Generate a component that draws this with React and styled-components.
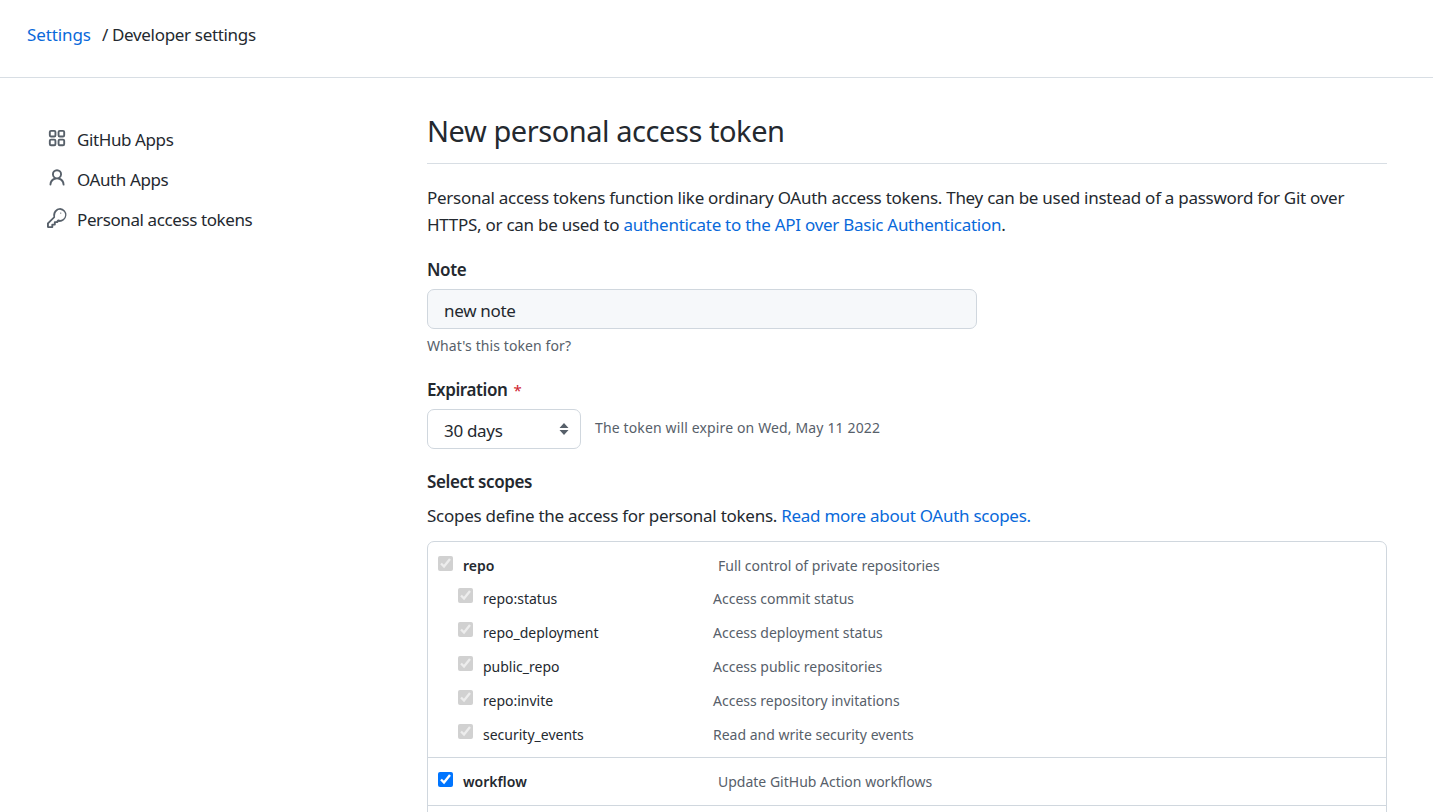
import React from "react";
import styled, { createGlobalStyle } from "styled-components";

const GlobalStyle = createGlobalStyle`
  html, body {
    margin: 0;
    height: 812px;
    overflow: hidden;
    background: #fff;
    color: #24292f;
    font-family: "Noto Sans", "Open Sans", "Liberation Sans", sans-serif;
  }
  * { box-sizing: border-box; }
`;

const Header = styled.header`
  height: 78px;
  border-bottom: 1px solid #d8dee4;
  padding: 0 27px;
  display: flex;
  align-items: center;
  padding-bottom: 9px;
  font-size: 17px;
`;

const Crumb = styled.a`
  color: #0969da;
  text-decoration: none;
  letter-spacing: -0.1px;
`;

const CrumbCurrent = styled.span`
  margin-left: 11px;
  color: #24292f;
  letter-spacing: -0.32px;
`;

const Layout = styled.div`
  display: grid;
  grid-template-columns: 427px 960px;
`;

const SideNav = styled.nav`
  padding: 41px 0 0 47px;
  display: flex;
  flex-direction: column;
`;

const NavItem = styled.a`
  height: 40px;
  display: flex;
  align-items: center;
  gap: 10px;
  font-size: 17px;
  letter-spacing: -0.4px;
  color: #24292f;
  svg {
    width: 20px;
    height: 20px;
    color: #57606a;
    fill: currentColor;
    margin-top: -2px;
  }
`;

const Main = styled.main`
  padding-top: 32px;
`;

const Title = styled.h2`
  margin: 0;
  height: 54px;
  font-size: 29px;
  font-weight: 400;
  line-height: 42px;
  letter-spacing: -0.44px;
  border-bottom: 1px solid #d8dee4;
`;

const Intro = styled.p`
  margin: 20px 0 0;
  font-size: 17px;
  line-height: 27px;
  letter-spacing: -0.27px;
`;

const Link = styled.a`
  color: #0969da;
  text-decoration: none;
`;

const Label = styled.div`
  font-size: 17px;
  font-weight: 600;
  line-height: 24px;
  letter-spacing: -0.4px;
  margin-top: ${(p) => p.$top}px;
`;

const Required = styled.span`
  color: #cf222e;
  font-size: 15px;
  font-weight: 400;
  margin-left: 6px;
`;

const NoteInput = styled.input`
  display: block;
  width: 550px;
  height: 40px;
  margin-top: 7px;
  padding: 2px 16px 0;
  background: #f6f8fa;
  border: 1px solid #d0d7de;
  border-radius: 7px;
  font: inherit;
  font-size: 17px;
  letter-spacing: -0.3px;
  color: #24292f;
`;

const Hint = styled.div`
  margin-top: 6px;
  font-size: 14px;
  line-height: 21px;
  letter-spacing: 0.1px;
  color: #57606a;
`;

const ExpiryRow = styled.div`
  display: flex;
  align-items: center;
  gap: 14px;
  margin-top: 7px;
`;

const SelectBox = styled.div`
  width: 154px;
  height: 40px;
  padding: 2px 11px 0 16px;
  display: flex;
  align-items: center;
  justify-content: space-between;
  border: 1px solid #d0d7de;
  border-radius: 7px;
  font-size: 17px;
  letter-spacing: -0.3px;
  svg {
    width: 10px;
    height: 14px;
    margin-top: -2px;
  }
`;

const ExpiryNote = styled.span`
  font-size: 14px;
  letter-spacing: 0.14px;
  color: #57606a;
  margin-top: -3px;
`;

const ScopeIntro = styled.p`
  margin: 8px 0 0;
  font-size: 17px;
  line-height: 27px;
  letter-spacing: -0.27px;
`;

const ScopeTable = styled.div`
  margin-top: 12px;
  border: 1px solid #d0d7de;
  border-radius: 7px;
`;

const ScopeGroup = styled.div`
  padding: ${(p) => p.$pad};
  & + & {
    border-top: 1px solid #d0d7de;
  }
`;

const SubList = styled.div`
  margin-top: 4px;
`;

const ScopeRow = styled.div`
  display: grid;
  grid-template-columns: ${(p) => (p.$sub ? "20px 25px 230px 1fr" : "0 25px 255px 1fr")};
  align-items: center;
  height: ${(p) => (p.$sub ? 34 : 24)}px;
  font-size: 14px;
  color: #57606a;
`;

const Check = styled.input`
  grid-column: 2;
  width: 15px;
  height: 15px;
  margin: ${(p) => (p.$sub ? -6 : -4)}px 0 0;
`;

const ScopeName = styled.span`
  color: #24292f;
  font-weight: ${(p) => (p.$sub ? 400 : 600)};
`;

const subScopes = [
  ["repo:status", "Access commit status"],
  ["repo_deployment", "Access deployment status"],
  ["public_repo", "Access public repositories"],
  ["repo:invite", "Access repository invitations"],
  ["security_events", "Read and write security events"],
];

const AppsIcon = () => (
  <svg viewBox="0 0 16 16" aria-hidden="true">
    <g fill="none" stroke="currentColor" strokeWidth="1.5">
      <rect x="2.25" y="2.25" width="4.5" height="4.5" rx="1" />
      <rect x="9.25" y="2.25" width="4.5" height="4.5" rx="1" />
      <rect x="2.25" y="9.25" width="4.5" height="4.5" rx="1" />
      <rect x="9.25" y="9.25" width="4.5" height="4.5" rx="1" />
    </g>
  </svg>
);

const PersonIcon = () => (
  <svg viewBox="0 0 16 16" aria-hidden="true">
    <path
      fillRule="evenodd"
      d="M10.5 5a2.5 2.5 0 11-5 0 2.5 2.5 0 015 0zm.061 3.073a4 4 0 10-5.123 0 6.004 6.004 0 00-3.431 5.142.75.75 0 001.498.07 4.5 4.5 0 018.99 0 .75.75 0 101.498-.07 6.005 6.005 0 00-3.432-5.142z"
    />
  </svg>
);

const KeyIcon = () => (
  <svg viewBox="0 0 16 16" aria-hidden="true">
    <path
      fillRule="evenodd"
      d="M6.5 5.5a4 4 0 112.731 3.795.75.75 0 00-.768.18L7.44 10.5H6.25a.75.75 0 00-.75.75v1.25H4.25a.75.75 0 00-.75.75v1.25H1.5v-1.94l4.776-4.775a.75.75 0 00.18-.768A3.995 3.995 0 016.5 5.5zM10.5 0a5.5 5.5 0 00-5.315 6.9L.22 11.865a.75.75 0 00-.22.53v2.855c0 .414.336.75.75.75h3.5a.75.75 0 00.75-.75V14h1.25a.75.75 0 00.75-.75V12h1.19c.2 0 .39-.08.53-.22l.7-.7A5.5 5.5 0 1010.5 0zm.5 4.5a.5.5 0 100-1 .5.5 0 000 1z"
    />
  </svg>
);

export default function App() {
  return (
    <>
      <GlobalStyle />
      <Header>
        <Crumb href="#">Settings</Crumb>
        <CrumbCurrent>/ Developer settings</CrumbCurrent>
      </Header>
      <Layout>
        <SideNav>
          <NavItem><AppsIcon /> GitHub Apps</NavItem>
          <NavItem><PersonIcon /> OAuth Apps</NavItem>
          <NavItem><KeyIcon /> Personal access tokens</NavItem>
        </SideNav>
        <Main>
          <Title>New personal access token</Title>
          <Intro>
            Personal access tokens function like ordinary OAuth access tokens. They can be used instead of a password for Git over HTTPS, or can be used to{" "}
            <Link href="#">authenticate to the API over Basic Authentication</Link>.
          </Intro>
          <Label $top={20}>Note</Label>
          <NoteInput defaultValue="new note" readOnly />
          <Hint>What's this token for?</Hint>
          <Label $top={22}>Expiration<Required>*</Required></Label>
          <ExpiryRow>
            <SelectBox>
              30 days
              <svg viewBox="0 0 10 14" aria-hidden="true">
                <path d="M5 1 9.5 6H.5zM5 13 .5 8h9z" fill="#57606a" />
              </svg>
            </SelectBox>
            <ExpiryNote>The token will expire on Wed, May 11 2022</ExpiryNote>
          </ExpiryRow>
          <Label $top={21}>Select scopes</Label>
          <ScopeIntro>
            Scopes define the access for personal tokens. <Link href="#">Read more about OAuth scopes.</Link>
          </ScopeIntro>
          <ScopeTable>
            <ScopeGroup $pad="11px 10px 6px">
              <ScopeRow>
                <Check type="checkbox" checked disabled readOnly />
                <ScopeName>repo</ScopeName>
                <span>Full control of private repositories</span>
              </ScopeRow>
              <SubList>
                {subScopes.map(([name, desc]) => (
                  <ScopeRow $sub key={name}>
                    <Check $sub type="checkbox" checked disabled readOnly />
                    <ScopeName $sub>{name}</ScopeName>
                    <span>{desc}</span>
                  </ScopeRow>
                ))}
              </SubList>
            </ScopeGroup>
            <ScopeGroup $pad="11px 10px 12px">
              <ScopeRow>
                <Check type="checkbox" checked readOnly />
                <ScopeName>workflow</ScopeName>
                <span>Update GitHub Action workflows</span>
              </ScopeRow>
            </ScopeGroup>
            <ScopeGroup $pad="12px 10px" />
          </ScopeTable>
        </Main>
      </Layout>
    </>
  );
}
